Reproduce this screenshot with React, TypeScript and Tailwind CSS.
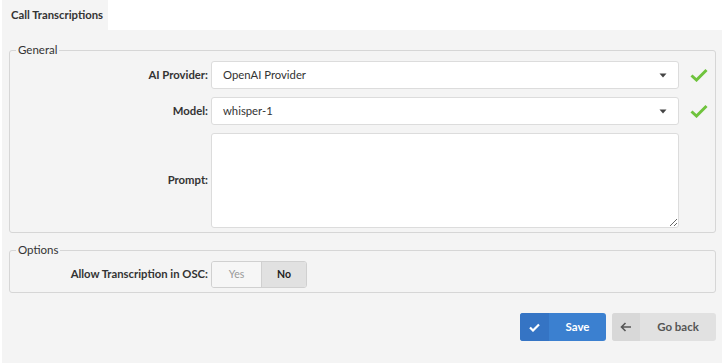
import React from "react";

function Caret() {
  return (
    <svg width="8" height="5" viewBox="0 0 8 5" className="absolute right-[11px] top-[11px]">
      <path d="M0.5 0.5 L7.5 0.5 L4 4.5 Z" fill="#444" />
    </svg>
  );
}

function Check() {
  return (
    <svg width="18" height="14" viewBox="0 0 18 14">
      <path d="M1.5 7.5 L6.5 12 L16.5 2" fill="none" stroke="#6fc33d" strokeWidth="3" strokeLinejoin="miter" />
    </svg>
  );
}

function Label({ children }: { children: React.ReactNode }) {
  return (
    <div className="w-[201px] shrink-0 text-right pr-[3px] text-[11.3px] font-bold text-[#333] whitespace-nowrap">{children}</div>
  );
}

export default function App() {
  return (
    <div className="w-[724px] h-[363px] bg-white flex flex-col" style={{ fontFamily: "Lato, 'Noto Sans', sans-serif" }}>
      <div className="h-[30px] flex shrink-0">
        <div className="ml-[2px] w-[106px] bg-[#f4f4f4] flex items-center pl-[9px] text-[11.3px] font-bold text-[#333] whitespace-nowrap">
          Call Transcriptions
        </div>
      </div>
      <div className="flex-1 mx-[2px] bg-[#f4f4f4] px-[7px] pt-[13px] flex flex-col">
        <fieldset className="border border-[#d6d6d6] rounded-[3px] mr-[-1px] pb-[4px]">
          <legend className="ml-[6px] px-[2px] text-[11.5px] text-[#333] leading-[14px]">General</legend>
          <div className="flex flex-col gap-[8px] pt-[4px]">
            <div className="flex items-center">
              <Label>AI Provider:</Label>
              <div className="relative w-[468px] h-[28px] bg-white border border-[#dcdcdc] rounded-[3px] flex items-center pl-[11px] text-[11.3px] text-[#333]">
                OpenAI Provider
                <Caret />
              </div>
              <div className="ml-[11px]"><Check /></div>
            </div>
            <div className="flex items-center">
              <Label>Model:</Label>
              <div className="relative w-[468px] h-[28px] bg-white border border-[#dcdcdc] rounded-[3px] flex items-center pl-[11px] text-[11.3px] text-[#333]">
                whisper-1
                <Caret />
              </div>
              <div className="ml-[11px]"><Check /></div>
            </div>
            <div className="flex items-center">
              <Label>Prompt:</Label>
              <textarea className="w-[468px] h-[95px] bg-white border border-[#dcdcdc] rounded-[3px] outline-none" />
            </div>
          </div>
        </fieldset>
        <fieldset className="border border-[#d6d6d6] rounded-[3px] mr-[-1px] mt-[10px] pb-[4px]">
          <legend className="ml-[6px] px-[2px] text-[11.5px] text-[#333] leading-[14px]">Options</legend>
          <div className="flex items-center pt-[4px]">
            <Label>Allow Transcription in OSC:</Label>
            <div className="flex h-[27px] border border-[#d0d0d0] rounded-[3px] overflow-hidden text-[10.5px]">
              <div className="w-[49px] flex items-center justify-center bg-[#f6f6f6] text-[#999]">Yes</div>
              <div className="w-[45px] flex items-center justify-center bg-[#e1e1e1] border-l border-[#d0d0d0] text-[#222] font-bold">No</div>
            </div>
          </div>
        </fieldset>
        <div className="flex justify-end gap-[6px] mt-[20px] mr-[-1px]">
          <div className="w-[86px] h-[28px] flex rounded-[3px] overflow-hidden bg-[#3b80d0] text-white text-[11.5px] font-bold">
            <div className="w-[29px] flex items-center justify-center bg-[#3574c4]">
              <svg width="11" height="9" viewBox="0 0 11 9">
                <path d="M1 4.5 L4 7.5 L10 1.5" fill="none" stroke="white" strokeWidth="2.2" />
              </svg>
            </div>
            <div className="flex-1 flex items-center justify-center">Save</div>
          </div>
          <div className="w-[104px] h-[28px] flex rounded-[3px] overflow-hidden bg-[#e1e1e1] text-[#555] text-[11.5px] font-bold">
            <div className="w-[28px] flex items-center justify-center bg-[#d8d8d8]">
              <svg width="12" height="10" viewBox="0 0 12 10">
                <path d="M11 5 L1.5 5 M5.5 1 L1.5 5 L5.5 9" fill="none" stroke="#555" strokeWidth="1.6" />
              </svg>
            </div>
            <div className="flex-1 flex items-center justify-center">Go back</div>
          </div>
        </div>
      </div>
    </div>
  );
}
